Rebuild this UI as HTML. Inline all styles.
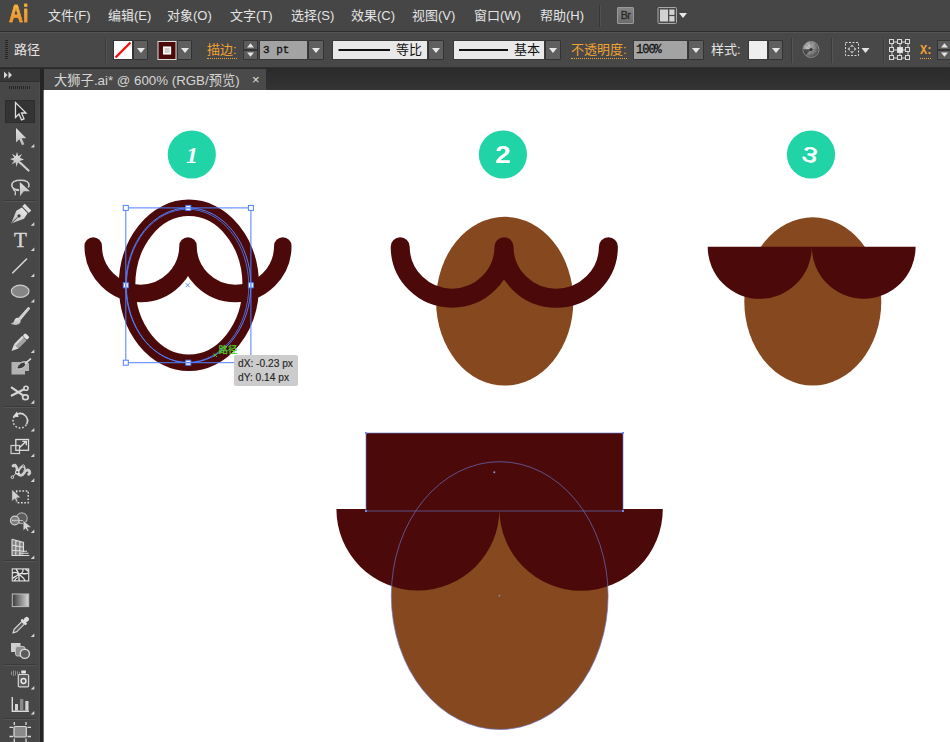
<!DOCTYPE html>
<html lang="zh-CN">
<head>
<meta charset="utf-8">
<title>大狮子.ai @ 600% (RGB/预览)</title>
<style>
html,body{margin:0;padding:0;}
body{width:950px;height:742px;overflow:hidden;background:#fff;position:relative;
  font-family:"Liberation Sans","Noto Sans CJK SC",sans-serif;}
.abs{position:absolute;}
#menubar{left:0;top:0;width:950px;height:31px;background:#464646;}
#menuline{left:0;top:31px;width:950px;height:1px;background:#2e2e2e;}
#ctrlbar{left:0;top:32px;width:950px;height:36px;background:#484848;border-top:1px solid #545454;box-sizing:border-box;}
#ctrlline{left:0;top:67px;width:950px;height:2px;background:linear-gradient(#333,#262626);}
#tabbar{left:0;top:69px;width:950px;height:21px;background:linear-gradient(#2b2b2b,#343434);}
#tab{left:44px;top:69px;width:222px;height:21px;background:#4a4a4a;}
#tbhead{left:0;top:69px;width:40px;height:12px;background:#383838;}
#toolbar{left:0;top:81px;width:40px;height:661px;background:#474747;border-right:1px solid #4e4e4e;box-sizing:border-box;border-top:1px solid #2e2e2e;}
#tbedge{left:40px;top:69px;width:4px;height:673px;background:#252525;}
#tbedge2{left:43px;top:90px;width:1px;height:652px;background:#6e6e6e;}
.m{top:7px;height:18px;line-height:18px;font-size:13px;color:#e4e4e4;white-space:nowrap;letter-spacing:0;}
.c{top:41px;height:18px;line-height:18px;font-size:13px;color:#e4e4e4;white-space:nowrap;}
.o{color:#f0a232;}
.dd{top:40px;width:15px;height:20px;background:#5f5f5f;box-sizing:border-box;border:1px solid #333;border-radius:1px;}
.dd:after{content:"";position:absolute;left:3px;top:7px;border-left:4px solid transparent;border-right:4px solid transparent;border-top:5px solid #e8e8e8;}
.sep{top:38px;width:1px;height:25px;background:#3a3a3a;box-shadow:1px 0 0 #535353;}
</style>
</head>
<body>
<!-- chrome backgrounds -->
<div class="abs" id="menubar"></div>
<div class="abs" id="menuline"></div>
<div class="abs" id="ctrlbar"></div>
<div class="abs" id="ctrlline"></div>
<div class="abs" id="tabbar"></div>
<div class="abs" id="tab"></div>
<div class="abs" id="tbhead"></div>
<div class="abs" id="toolbar"></div>
<div class="abs" id="tbedge"></div>
<div class="abs" id="tbedge2"></div>

<!-- MENUBAR -->
<div class="abs" style="left:8.500px;top:-2.500px;font-size:23px;line-height:32px;font-weight:bold;color:#f2a02e;background:linear-gradient(#f8b545 20%,#e8902a 80%);-webkit-background-clip:text;background-clip:text;-webkit-text-fill-color:transparent;-webkit-text-stroke:0.500px #f0a233;transform:scaleX(0.840);transform-origin:0 0;">Ai</div>
<div class="abs m" style="left:48px;">文件(F)</div>
<div class="abs m" style="left:108px;">编辑(E)</div>
<div class="abs m" style="left:167px;">对象(O)</div>
<div class="abs m" style="left:230px;">文字(T)</div>
<div class="abs m" style="left:291px;">选择(S)</div>
<div class="abs m" style="left:351px;">效果(C)</div>
<div class="abs m" style="left:412px;">视图(V)</div>
<div class="abs m" style="left:474px;">窗口(W)</div>
<div class="abs m" style="left:540px;">帮助(H)</div>
<div class="abs" style="left:599px;top:5px;width:1px;height:22px;background:#363636;box-shadow:1px 0 0 #525252;"></div>
<div class="abs" style="left:617px;top:7px;width:17px;height:17px;background:linear-gradient(#858585,#6c6c6c);border:1px solid #9a9a9a;border-radius:1px;box-sizing:border-box;font-size:10.500px;line-height:15px;text-align:center;color:#262626;letter-spacing:-0.500px;-webkit-text-stroke:0.300px #262626;">Br</div>

<!-- CONTROL BAR -->
<div class="abs c" style="left:14px;">路径</div>
<div class="abs c o" style="left:207px;border-bottom:1px dotted #f0a232;height:17px;">描边:</div>
<div class="abs c o" style="left:571px;border-bottom:1px dotted #f0a232;height:17px;">不透明度:</div>
<div class="abs c" style="left:711px;">样式:</div>
<div class="abs c o" style="left:920px;top:42px;border-bottom:1px dotted #f0a232;height:16px;font-size:12px;font-family:'Liberation Mono',monospace;font-weight:bold;letter-spacing:-1.500px;">X:</div>


<!-- control bar widgets -->
<svg class="abs" style="left:0;top:32px;" width="950" height="37" viewBox="0 32 950 37">
  <!-- grip -->
  <g fill="#262626"><rect x="5" y="40" width="3" height="1"/><rect x="5" y="42" width="3" height="1"/><rect x="5" y="44" width="3" height="1"/><rect x="5" y="46" width="3" height="1"/><rect x="5" y="48" width="3" height="1"/><rect x="5" y="50" width="3" height="1"/><rect x="5" y="52" width="3" height="1"/><rect x="5" y="54" width="3" height="1"/><rect x="5" y="56" width="3" height="1"/><rect x="5" y="58" width="3" height="1"/></g>
  <!-- fill swatch -->
  <rect x="113.5" y="40.5" width="19" height="19" fill="#fff" stroke="#333"/>
  <line x1="115.500" y1="57.500" x2="130.500" y2="42.500" stroke="#f01414" stroke-width="2.400"/>
  <!-- stroke swatch -->
  <rect x="158" y="41.500" width="18" height="18" fill="#4b090a" stroke="#dcdcdc"/>
  <rect x="163.800" y="47.200" width="6.600" height="6.600" fill="#cfcfcf" stroke="#ffffff" stroke-width="1.500"/>
  <!-- spinner -->
  <rect x="243.500" y="40.500" width="14" height="9" fill="#5c5c5c" stroke="#353535"/><rect x="243.500" y="50.500" width="14" height="9" fill="#5c5c5c" stroke="#353535"/>
  <path d="M247 47.500 L250.500 43.300 L254 47.500 Z M247 52.500 L250.500 56.700 L254 52.500 Z" fill="#e4e4e4"/>
  <rect x="259.5" y="40.5" width="48" height="19" fill="#a3a3a3" stroke="#393939"/>
  <!-- profile dropdown -->
  <rect x="332.5" y="40.5" width="95" height="19" fill="#e9e9e9" stroke="#393939"/>
  <line x1="338.500" y1="50" x2="390" y2="50" stroke="#111" stroke-width="2"/>
  <!-- brush dropdown -->
  <rect x="453.5" y="40.5" width="91" height="19" fill="#e9e9e9" stroke="#393939"/>
  <line x1="459" y1="50" x2="508" y2="50" stroke="#111" stroke-width="2"/>
  <!-- opacity -->
  <rect x="633.5" y="40.5" width="54" height="19" fill="#a3a3a3" stroke="#393939"/>
  <!-- style swatch -->
  <rect x="748.5" y="40.5" width="19" height="19" fill="#eeeeee" stroke="#393939"/>
  <!-- recolor -->
  <defs><radialGradient id="rc" cx="0.35" cy="0.35" r="0.8"><stop offset="0" stop-color="#cfcfcf"/><stop offset="0.550" stop-color="#808080"/><stop offset="1" stop-color="#2c2c2c"/></radialGradient></defs>
  <circle cx="811" cy="49.5" r="8" fill="url(#rc)" stroke="#9a9a9a" stroke-width="0.8"/>
  <path d="M811 49.500 L811 41.700 M811 49.500 L816.500 44 M811 49.500 L818.800 49.500 M811 49.500 L805.500 44 M811 49.500 L803.200 49.500 M811 49.500 L805.500 55 M811 49.500 L811 57.300 M811 49.500 L816.500 55" stroke="#5a5a5a" stroke-width="0.700" opacity="0.700"/><path d="M811 49.500 L805.500 55 A7.800 7.800 0 0 1 803.200 49.500 Z" fill="#2a2a2a" opacity="0.700"/><circle cx="811" cy="49.500" r="1.500" fill="#333"/>
  <!-- align selection -->
  <rect x="845.5" y="42.500" width="13" height="13" fill="none" stroke="#dcdcdc" stroke-width="1" stroke-dasharray="2 1.5"/>
  <path d="M852 44.500 L854 46.800 H850 Z M852 53.500 L854 51.200 H850 Z M847.500 49 L849.800 47 V51 Z M856.500 49 L854.200 47 V51 Z" fill="#c4c4c4"/>
  <path d="M861.500 48 H869.500 L865.500 53 Z" fill="#e4e4e4"/>
  <!-- 9pt -->
  <g fill="#484848" stroke="#dadada" stroke-width="1">
    <path d="M892 42 H908 V58 H892 Z M892 50 H908 M900 42 V58" fill="none"/>
    <rect x="889.500" y="39.500" width="4" height="4"/><rect x="897.500" y="39.500" width="4" height="4"/><rect x="905.500" y="39.500" width="4" height="4"/>
    <rect x="889.500" y="47.500" width="4" height="4"/><rect x="897.500" y="47.500" width="5" height="5" fill="#e6e6e6"/><rect x="905.500" y="47.500" width="4" height="4"/>
    <rect x="889.500" y="55.500" width="4" height="4"/><rect x="897.500" y="55.500" width="4" height="4"/><rect x="905.500" y="55.500" width="4" height="4"/>
  </g>
  <!-- X spinner -->
  <rect x="937.500" y="40.500" width="14" height="9" fill="#5c5c5c" stroke="#353535"/><rect x="937.500" y="50.500" width="14" height="9" fill="#5c5c5c" stroke="#353535"/>
  <path d="M941 47.500 L944.500 43.300 L948 47.500 Z M941 52.500 L944.500 56.700 L948 52.500 Z" fill="#e4e4e4"/>
</svg>
<div class="abs dd" style="left:133px;"></div>
<div class="abs dd" style="left:177px;"></div>
<div class="abs dd" style="left:308px;width:16px;"></div>
<div class="abs dd" style="left:428px;width:16px;"></div>
<div class="abs dd" style="left:545px;width:16px;"></div>
<div class="abs dd" style="left:688px;width:16px;"></div>
<div class="abs dd" style="left:768px;"></div>
<div class="abs sep" style="left:105px;"></div>
<div class="abs sep" style="left:791px;"></div>
<div class="abs sep" style="left:831px;"></div>
<div class="abs sep" style="left:883px;"></div>
<div class="abs" style="left:263px;top:42px;font-family:'Liberation Mono',monospace;font-size:11px;-webkit-text-stroke:0.300px #111;line-height:16px;color:#111;white-space:pre;">3 pt</div>
<div class="abs" style="left:636px;top:42px;font-family:'Liberation Mono',monospace;font-size:12px;line-height:16px;color:#111;letter-spacing:-1px;-webkit-text-stroke:0.300px #111;">100%</div>
<div class="abs" style="left:396px;top:41px;font-size:13px;line-height:18px;color:#111;">等比</div>
<div class="abs" style="left:514px;top:41px;font-size:13px;line-height:18px;color:#111;">基本</div>
<!-- workspace icon -->
<svg class="abs" style="left:655px;top:4px;" width="40" height="24" viewBox="655 4 40 24">
  <rect x="658" y="7.500" width="18.500" height="16" rx="1" fill="#4a4a4a" stroke="#a8a8a8"/>
  <rect x="660" y="9.500" width="8" height="12" fill="#d2d2d2"/><rect x="669.300" y="9.500" width="5.200" height="5.400" fill="#d2d2d2"/><rect x="669.300" y="16.100" width="5.200" height="5.400" fill="#d2d2d2"/>
  <path d="M679 13 H687 L683 18 Z" fill="#e8e8e8"/>
</svg>

<!-- TAB -->
<div class="abs" style="left:54px;top:71px;height:19px;line-height:19px;font-size:13.300px;color:#d6d6d6;white-space:nowrap;">大狮子.ai* @ 600% (RGB/预览)</div>
<div class="abs" style="left:252px;top:70.500px;height:19px;line-height:18px;font-size:13px;color:#e0e0e0;">×</div>


<!-- TOOLBAR ICONS -->
<svg class="abs" style="left:0;top:69px;" width="43" height="673" viewBox="0 69 43 673">
<defs>
  <linearGradient id="gr" x1="0" y1="0" x2="1" y2="0"><stop offset="0" stop-color="#3a3a3a"/><stop offset="1" stop-color="#d8d8d8"/></linearGradient>
  <linearGradient id="ig" x1="0" y1="0" x2="0" y2="1"><stop offset="0" stop-color="#e6e6e6"/><stop offset="1" stop-color="#b8b8b8"/></linearGradient>
</defs>
<!-- collapse arrows -->
<path d="M4 71.500 L7.500 75 L4 78.500 Z M8.500 71.500 L12 75 L8.500 78.500 Z" fill="#d8d8d8"/>
<!-- grip -->
<g fill="#262626"><rect x="9" y="86" width="1" height="3"/><rect x="11" y="86" width="1" height="3"/><rect x="13" y="86" width="1" height="3"/><rect x="15" y="86" width="1" height="3"/><rect x="17" y="86" width="1" height="3"/><rect x="19" y="86" width="1" height="3"/><rect x="21" y="86" width="1" height="3"/><rect x="23" y="86" width="1" height="3"/><rect x="25" y="86" width="1" height="3"/><rect x="27" y="86" width="1" height="3"/><rect x="29" y="86" width="1" height="3"/></g>
<!-- separators -->
<g stroke="#3a3a3a" stroke-width="1"><path d="M4 200.500 H36 M4 406.500 H36 M4 560.500 H36 M4 664.500 H36 M4 718.500 H36"/></g>
<g stroke="#555" stroke-width="1"><path d="M4 201.500 H36 M4 407.500 H36 M4 561.500 H36 M4 665.500 H36 M4 719.500 H36"/></g>
<!-- 1 selection -->
<rect x="5.500" y="100.500" width="29" height="22" fill="#343434" stroke="#2c2c2c"/>
<path d="M15.500 102.500 V117.500 L19 114 L21.500 119.800 L24 118.800 L21.500 113 H26 Z" fill="#2b2b2b" stroke="#dedede" stroke-width="1.300" stroke-linejoin="miter"/>
<!-- 2 direct selection -->
<path d="M16 128 V142.500 L19.300 139.300 L22 145.300 L24.300 144.300 L21.700 138.300 H26.300 Z" fill="url(#ig)"/>
<path d="M34.300 143.900 V147.500 H30.700 Z" fill="#d6d6d6"/>
<!-- 3 magic wand -->
<path d="M17 152 L18.300 156.300 L22 154 L19.800 157.800 L24 159.500 L19.800 161 L21.500 165 L18 162.500 L16.500 167 L15.500 162.300 L11.500 164.500 L14 160.800 L10 159 L14.300 157.800 L12 153.800 L15.800 156.200 Z" fill="url(#ig)"/>
<path d="M20.500 163 L28.500 170.500" stroke="#cfcfcf" stroke-width="2.200" stroke-linecap="round"/>
<!-- 4 lasso -->
<path d="M20 196.300 L19.800 182 L30 191.300 L23.800 191.300 Z" fill="url(#ig)"/>
<path d="M19 189.800 C14 189.800 11.800 187.800 11.800 185 C11.800 182 15.500 180.200 20.500 180.200 C25.500 180.200 29 182 29 185 C29 186 28.700 186.800 28.200 187.500" fill="none" stroke="#cfcfcf" stroke-width="1.600"/>
<path d="M13 189.500 C14.500 190.300 16.500 191 15 195.300 M16 190 L19 190.500" fill="none" stroke="#cfcfcf" stroke-width="1.300"/>
<!-- 5 pen -->
<g transform="translate(19.400 215.500) rotate(46) scale(1.060)">
  <path d="M-3.800 -7 H3.800 L5.200 -1 L0 10.800 L-5.200 -1 Z" fill="url(#ig)"/>
  <rect x="-4.400" y="-11.300" width="8.800" height="3.300" fill="#dcdcdc"/>
  <circle cx="0" cy="0.500" r="1.500" fill="#3c3c3c"/>
  <path d="M0 2 V10" stroke="#3c3c3c" stroke-width="0.800"/>
</g>
<path d="M34.300 222.200 V225.800 H30.700 Z" fill="#d6d6d6"/>
<!-- 7 line -->
<path d="M12.800 272.800 L26.600 259" stroke="#d4d4d4" stroke-width="1.600" stroke-linecap="round"/>
<path d="M34.300 247.400 V251.000 H30.700 Z" fill="#d6d6d6"/><path d="M34.300 273.400 V277.000 H30.700 Z" fill="#d6d6d6"/>
<!-- 8 ellipse -->
<ellipse cx="20.200" cy="291.200" rx="8.800" ry="6.100" fill="#868686" stroke="#cdcdcd" stroke-width="1.200"/>
<path d="M34.300 298.900 V302.500 H30.700 Z" fill="#d6d6d6"/>
<!-- 9 brush -->
<g transform="translate(0 1.200)">
<path d="M29.600 307.300 L20.600 318.200 L18.900 316.800 L28.300 306.300 Z" fill="#d2d2d2" stroke="#d2d2d2" stroke-width="1.100" stroke-linejoin="round"/>
<path d="M18.300 316.600 L20.600 319 C21.300 322.800 16.500 325.300 10.300 322.600 C13.300 322 14 320.500 14.500 318.800 C15 317 16.800 316 18.300 316.600 Z" fill="url(#ig)"/>
</g>
<!-- 10 pencil -->
<g transform="translate(19.300 343.300) rotate(45)">
  <rect x="-3.100" y="-11.500" width="6.200" height="3.800" rx="1.400" fill="#e2e2e2"/>
  <rect x="-3.100" y="-7.200" width="6.200" height="11.500" fill="#a2a2a2"/>
  <rect x="-3.100" y="-7.200" width="2.100" height="11.500" fill="#d8d8d8"/>
  <path d="M-3.100 4.300 H3.100 L0 11 Z" fill="#dcdcdc"/>
</g>
<path d="M34.300 349.400 V353 H30.700 Z" fill="#d6d6d6"/>
<!-- 11 blob brush -->
<path d="M11.500 362 H21 C23.500 360.300 27.500 360.800 29 363.500 V371 H25 V374.500 H11.500 Z" fill="#b2b2b2"/>
<path d="M26.300 362.300 C22 361.300 18 364 16.600 368.600 C21.500 369.800 25.800 367 26.300 362.300 Z" fill="#3c3c3c" stroke="#d4d4d4" stroke-width="0.900"/>
<path d="M25.300 363.300 L30.600 358.900" stroke="#dadada" stroke-width="1.500" stroke-linecap="round"/>
<!-- 12 scissors -->
<g fill="none" stroke="#d6d6d6" stroke-linecap="round">
  <path d="M11.800 387.600 L23 395.300" stroke-width="2.200"/><path d="M11.800 395.600 L23.500 389.600" stroke-width="2.200"/>
  <ellipse cx="26" cy="388.300" rx="2.100" ry="2" stroke-width="1.600"/><ellipse cx="25.400" cy="397.200" rx="2.800" ry="2.400" stroke-width="1.700"/>
</g>
<path d="M34.300 400.100 V403.700 H30.700 Z" fill="#d6d6d6"/>
<!-- 13 rotate -->
<circle cx="20.2" cy="420.8" r="7.2" fill="none" stroke="#d0d0d0" stroke-width="1.600" stroke-dasharray="1.700 1.850" stroke-dashoffset="-4"/>
<path d="M16.070 414.902 A7.2 7.2 0 0 1 26.435 424.400" fill="none" stroke="#484848" stroke-width="2.400"/>
<path d="M16.070 414.902 A7.2 7.2 0 0 1 26.435 424.400" fill="none" stroke="#d6d6d6" stroke-width="1.600"/>
<path d="M12.800 416.800 L17 411.600 L18.600 417 Z" fill="#e0e0e0"/>
<path d="M34.300 427.900 V431.500 H30.700 Z" fill="#d6d6d6"/>
<!-- 14 scale -->
<rect x="11" y="445.500" width="8.500" height="8" fill="none" stroke="#cfcfcf" stroke-width="1.200"/>
<rect x="15.800" y="439.500" width="12.700" height="10.800" fill="none" stroke="#dcdcdc" stroke-width="1.300"/>
<path d="M19.500 447.500 L26 441.500 M22.300 441.300 H26.300 V445.300" fill="none" stroke="#e4e4e4" stroke-width="1.300"/>
<path d="M34.300 453.400 V457.000 H30.700 Z" fill="#d6d6d6"/>
<!-- 15 width/warp -->
<path d="M13 466 C15 463.800 17.300 466.500 17.300 471.500 C18 476 22 476.300 23.800 473.300 C25.300 470.300 28 468.800 29.500 471.300 C30.100 472.800 29.600 473.800 28.600 474.300" fill="none" stroke="#cdcdcd" stroke-width="2.800" stroke-linecap="round"/>
<path d="M18 472 C19.500 468 21.500 466 23.500 466.300 C25.500 467 25 469.500 24.300 470.500" fill="none" stroke="#c4c4c4" stroke-width="1.800" stroke-linecap="round"/>
<path d="M12.400 477 L23.200 466.200" stroke="#e2e2e2" stroke-width="0.900"/>
<circle cx="17.300" cy="472.200" r="1.700" fill="#484848" stroke="#f0f0f0" stroke-width="1.100"/>
<circle cx="12.400" cy="477.200" r="1.300" fill="#484848" stroke="#e8e8e8" stroke-width="0.900"/>
<circle cx="23.200" cy="466" r="1.200" fill="#484848" stroke="#e8e8e8" stroke-width="0.800"/>
<path d="M34.300 478.300 V481.900 H30.700 Z" fill="#d6d6d6"/>
<!-- 16 free transform -->
<rect x="16.600" y="491" width="11.600" height="11.800" fill="none" stroke="#d8d8d8" stroke-width="1.500" stroke-dasharray="1.700 1.600" stroke-dashoffset="0.800"/>
<path d="M11.900 489.400 L20.600 497.600 L16.300 497.900 L17.800 501 L16.200 501.700 L14.800 498.800 L11.900 501.300 Z" fill="#d0d0d0" stroke="#484848" stroke-width="0.500"/>
<!-- 17 shape builder -->
<circle cx="21.800" cy="518.200" r="5.400" fill="#5c5c5c" stroke="#a8a8a8" stroke-width="1.200"/>
<circle cx="14.800" cy="520.500" r="4.300" fill="#7a7a7a" stroke="#d0d0d0" stroke-width="1.200"/>
<path d="M12.300 520.500 H17.600" stroke="#e8e8e8" stroke-width="1.300" stroke-dasharray="1.200 0.900"/>
<path d="M18.500 520.500 H23" stroke="#c8c8c8" stroke-width="0.900"/>
<path d="M23.200 520.500 L31.300 527.300 L27.300 527.600 L28.800 530.600 L27.200 531.300 L25.800 528.500 L23.200 530.500 Z" fill="#d4d4d4" stroke="#484848" stroke-width="0.500"/>
<path d="M34.300 529.400 V533 H30.700 Z" fill="#d6d6d6"/>
<!-- 18 perspective grid -->
<path d="M12 539.300 L23.500 542.500 V555.500 H12 Z" fill="#a8a8a8" opacity="0.600"/>
<path d="M12 539.300 V555.500 H29.300 M12 539.300 L23.500 542.500 V552 M15.800 540.400 V555.500 M19.800 541.500 V555.500 M12 545 L23.500 547.300 M12 550.300 L23.500 551.300 M23.500 551.300 H27 M23.500 553.300 H28.600 M20 553.300 H23.500" fill="none" stroke="#dcdcdc" stroke-width="1.100"/>
<path d="M34.300 555.400 V559 H30.700 Z" fill="#d6d6d6"/>
<!-- 19 mesh -->
<rect x="12.300" y="568.900" width="16.400" height="12" fill="#3c3c3c" stroke="#d8d8d8" stroke-width="1.200"/>
<path d="M12.500 573 C15.500 571.500 17 572.500 18.500 574 C21 572.500 24.500 575 28.500 573 M18.500 574 C17 576.500 14.500 576.500 12.500 578.500 M18.500 574 C19.500 577 18.500 579 19.500 581 M18.500 574 C21.500 576.500 24 577.500 25 581 M16 569 C17.500 571 18 572 18.500 574 M23 569 C23.500 571 22.500 572.500 21.500 573.500 M14.500 581 C15 579 16.500 578 17.500 577.500 M25.500 569 C27 570.500 28 571 28.500 571" fill="none" stroke="#e8e8e8" stroke-width="1.300"/>
<!-- 20 gradient -->
<rect x="12.300" y="594" width="16.400" height="12.600" fill="url(#gr)" stroke="#bdbdbd" stroke-width="1"/>
<!-- 21 eyedropper -->
<g transform="translate(20.300 625.600) rotate(45)">
  <rect x="-2.200" y="-11.300" width="4.400" height="5.400" rx="1.800" fill="#dedede"/>
  <rect x="-3.500" y="-6.200" width="7" height="2.200" fill="#e6e6e6"/>
  <path d="M-1.800 -4 H1.800 V7 L0 10.300 L-1.800 7 Z" fill="#5a5a5a" stroke="#dcdcdc" stroke-width="1.100"/>
</g>
<path d="M34.300 633.400 V637.000 H30.700 Z" fill="#d6d6d6"/>
<!-- 22 blend -->
<rect x="11" y="643" width="9.500" height="9" fill="#cfcfcf"/>
<rect x="15.500" y="646.500" width="9.500" height="9.500" rx="2" fill="#8f8f8f" stroke="#c4c4c4" stroke-width="1"/>
<circle cx="24.800" cy="653.800" r="4.600" fill="#5a5a5a" stroke="#d6d6d6" stroke-width="1.400"/>
<!-- 23 symbol sprayer -->
<rect x="18.300" y="674.500" width="10.300" height="12.300" rx="1" fill="#5a5a5a" stroke="#d6d6d6" stroke-width="1.200"/>
<rect x="21.300" y="670.500" width="4.600" height="3" fill="#e6e6e6"/>
<circle cx="23.500" cy="681" r="2.400" fill="none" stroke="#e8e8e8" stroke-width="1.500"/>
<path d="M11.500 671.500 V675 M13.500 670.300 V676 M15.500 670.800 V675.500 M17.500 671.200 V674.800 M19.500 671.800 V674" stroke="#8e8e8e" stroke-width="1"/>
<path d="M34.300 686 V689.600 H30.700 Z" fill="#d6d6d6"/>
<!-- 24 column graph -->
<path d="M12.300 697 V711.300 H29" fill="none" stroke="#dadada" stroke-width="1.400"/>
<rect x="15" y="704" width="3" height="6.600" fill="#d2d2d2"/><rect x="20" y="699" width="3.300" height="11.600" fill="#8a8a8a"/><rect x="25.300" y="701" width="3.200" height="9.600" fill="#d2d2d2"/>
<path d="M34.300 710.900 V714.500 H30.700 Z" fill="#d6d6d6"/>
<!-- 25 artboard -->
<rect x="14" y="726.500" width="12.300" height="10.500" rx="1" fill="#8a8a8a" stroke="#dadada" stroke-width="1.200"/>
<path d="M14.300 722 V725 M26 722 V725 M9.500 727.300 H13 M27.500 727.300 H31 M9.500 736.500 H13 M27.500 736.500 H31 M14.300 738.500 V742 M26 738.500 V742" stroke="#dadada" stroke-width="1.300"/>
</svg>
<div class="abs" style="left:12px;top:228px;width:17px;text-align:center;font-family:'Liberation Serif',serif;font-size:21px;line-height:24px;color:#d6d6d6;-webkit-text-stroke:0.400px #d6d6d6;">T</div>

<!-- ARTWORK -->
<svg class="abs" style="left:0;top:0;" width="950" height="742" viewBox="0 0 950 742">
<defs>
<clipPath id="cv"><rect x="43" y="90" width="907" height="652"/></clipPath>
</defs>
<g clip-path="url(#cv)">
  <!-- badges -->
  <circle cx="191.800" cy="154.500" r="24.100" fill="#20d4a7"/>
  <circle cx="502.900" cy="154.500" r="24.100" fill="#20d4a7"/>
  <circle cx="811" cy="154.500" r="24.100" fill="#20d4a7"/>
  <!-- fig 1 -->
  <ellipse cx="188.900" cy="285.300" rx="61.850" ry="77.450" fill="none" stroke="#4b090a" stroke-width="16.500"/>
  <path d="M93.2 246 A47.4 47.4 0 0 0 188 246 M188 246 A47.4 47.4 0 0 0 282.8 246" fill="none" stroke="#4b090a" stroke-width="17.500" stroke-linecap="round"/>
  <!-- fig 2 -->
  <ellipse cx="504.7" cy="301.2" rx="68.6" ry="84.4" fill="#86481f"/>
  <path d="M400.2 246.7 A51.9 51.5 0 0 0 504 246.7 M504 246.7 A52.2 51.5 0 0 0 608.4 246.7" fill="none" stroke="#4b090a" stroke-width="19" stroke-linecap="round"/>
  <!-- fig 3 -->
  <ellipse cx="812.8" cy="301.4" rx="68.5" ry="84.1" fill="#86481f"/>
  <path d="M707.7 246.8 H915.6 A51.9 51.9 0 0 1 811.8 246.8 A52 52 0 0 1 707.7 246.8 Z" fill="#4b090a"/>
  <!-- fig 4 -->
  <ellipse cx="499.7" cy="595.6" rx="108.4" ry="133.9" fill="#86481f"/>
  <rect x="366" y="433" width="257" height="78" fill="#4b090a"/>
  <path d="M336.4 509 H662.8 A81.7 81.7 0 0 1 499.4 509 A81.5 81.5 0 0 1 336.4 509 Z" fill="#4b090a"/>
  <ellipse cx="499.700" cy="595.600" rx="108.400" ry="133.900" fill="none" stroke="#6a74c8" stroke-width="0.800" opacity="0.850"/>
  <path d="M366 511 V433 H623 V511 Z" fill="none" stroke="#6a74c8" stroke-width="0.800" opacity="0.800"/>

  <!-- selection overlay fig 1 -->
  <g fill="none" stroke="#4f80ff" stroke-width="1">
    <rect x="125.800" y="207.900" width="125.100" height="154.800"/>
    <ellipse cx="188.300" cy="285.300" rx="62.500" ry="77.400"/>
    <ellipse cx="187.600" cy="285.800" rx="61.200" ry="76.600" stroke-width="0.800"/>
    <path d="M185.700 283.200 L189.700 287.200 M189.700 283.200 L185.700 287.200" stroke-width="0.900"/>
  </g>
  <g fill="#fff" stroke="#4f80ff" stroke-width="1">
    <rect x="123.300" y="205.400" width="5" height="5"/><rect x="185.800" y="205.400" width="5" height="5"/><rect x="248.400" y="205.400" width="5" height="5"/>
    <rect x="123.300" y="282.800" width="5" height="5"/><rect x="248.400" y="282.800" width="5" height="5"/>
    <rect x="123.300" y="360.200" width="5" height="5"/><rect x="185.800" y="360.200" width="5" height="5"/>
  </g>
  <rect x="125.100" y="283.300" width="1.400" height="4" fill="#4f80ff"/><rect x="250.200" y="283.300" width="1.400" height="4" fill="#4f80ff"/><rect x="186.300" y="207.200" width="4" height="1.400" fill="#4f80ff"/><rect x="186.300" y="362" width="4" height="1.400" fill="#4f80ff"/>
  <path d="M213.500 353.500 L217 357 M217 353.500 L213.500 357" stroke="#3fd01e" stroke-width="1" fill="none"/>
  <!-- fig 4 anchor dots -->
  <circle cx="494.300" cy="472.300" r="1" fill="#7f9cf0"/>
  <circle cx="499.400" cy="595.600" r="0.900" fill="#8a8ad0"/>
  <rect x="365" y="432" width="2" height="2" fill="#6f86ee"/><rect x="622" y="432" width="2" height="2" fill="#6f86ee"/>
  <rect x="365" y="510" width="2" height="2" fill="#6f86ee"/><rect x="622" y="510" width="2" height="2" fill="#6f86ee"/>
</g>
</svg>

<div class="abs" style="left:218.500px;top:342.500px;font-size:9.500px;line-height:13px;color:#4fd02c;white-space:nowrap;-webkit-text-stroke:0.250px #4fd02c;">路径</div>
<div class="abs" style="left:234px;top:355px;width:64px;height:31px;background:#cccccc;border-radius:2px;"></div>
<div class="abs" style="left:238px;top:357px;font-size:10.200px;line-height:13.500px;color:#262626;white-space:nowrap;-webkit-text-stroke:0.150px #262626;">dX: -0.23 px<br>dY: 0.14 px</div>
<div class="abs" style="left:180px;top:142.500px;width:24px;text-align:center;font-family:'Liberation Serif',serif;font-style:italic;font-weight:bold;font-size:24px;line-height:24px;color:#fff;">1</div>
<div class="abs" style="left:490.300px;top:143px;width:26px;text-align:center;font-weight:bold;font-size:23.500px;line-height:24px;color:#fff;transform:scaleX(1.200);">2</div>
<div class="abs" style="left:797.300px;top:143px;width:26px;text-align:center;font-size:21px;line-height:24px;color:#fff;-webkit-text-stroke:0.600px #fff;transform:rotate(12deg) scaleX(1.300);">3</div>
</body>
</html>
